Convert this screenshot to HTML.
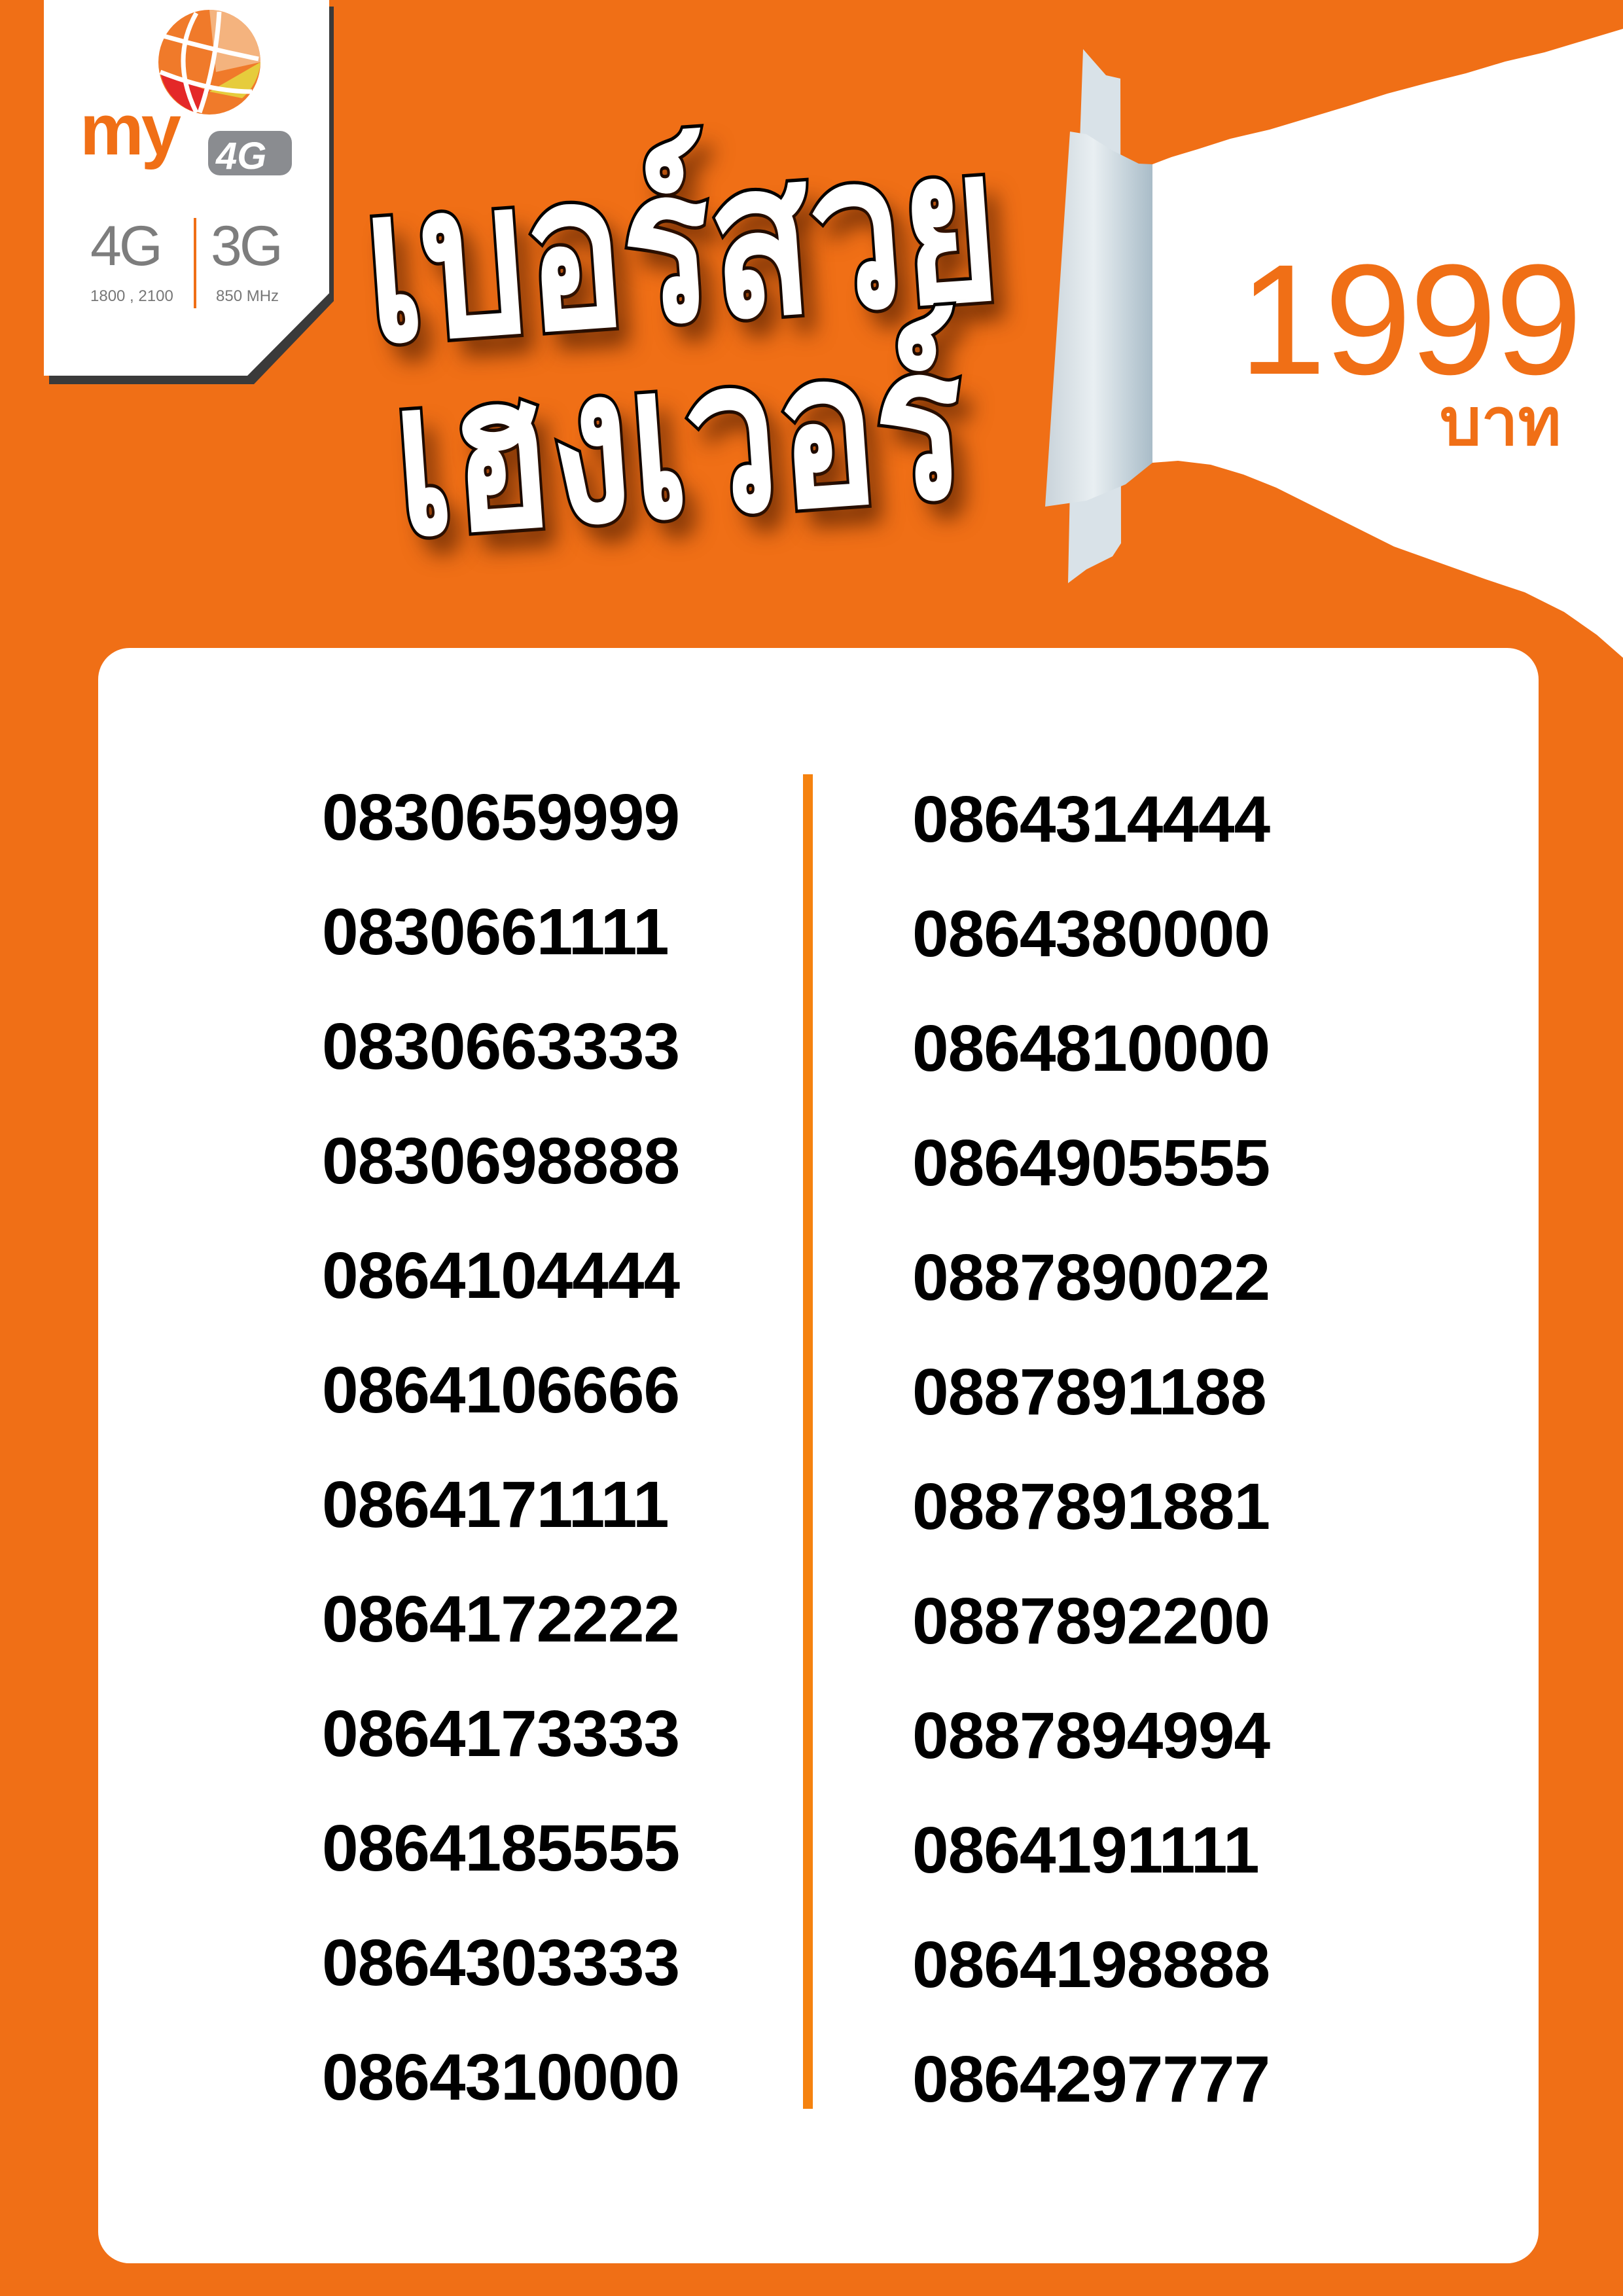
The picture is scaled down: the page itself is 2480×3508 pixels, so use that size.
<!DOCTYPE html>
<html><head><meta charset="utf-8">
<style>
html,body{margin:0;padding:0}
body{width:2480px;height:3508px;background:#f06f16;position:relative;overflow:hidden;font-family:"Liberation Sans","DejaVu Sans",sans-serif}
.abs{position:absolute}
.card{left:150px;top:990px;width:2201px;height:2468px;background:#fff;border-radius:48px}
.div{left:1227px;top:1183px;width:15px;height:2039px;background:#f5820f}
.col{position:absolute;font-weight:bold;font-size:100px;letter-spacing:-1px;color:#000;line-height:175px}
.title{color:#fff;font-family:"Liberation Sans","DejaVu Sans",sans-serif;font-weight:bold;-webkit-text-stroke:8px #000;paint-order:stroke fill;text-shadow:18px 22px 28px rgba(80,30,0,.75);white-space:nowrap;transform-origin:0 0}
</style></head><body>

<svg class="abs" style="left:0;top:0" width="2480" height="1100">
  <polygon fill="#fff" points="1761,251 1790,240 1830,228 1880,212 1940,198 2000,180 2060,162 2120,143 2180,127 2240,112 2300,94 2360,80 2420,62 2480,44 2480,1005 2440,970 2390,935 2330,905 2270,885 2200,860 2130,835 2060,800 2000,770 1950,745 1900,725 1850,710 1800,704 1761,707"/>
  <defs><linearGradient id="rg" x1="0" x2="1"><stop offset="0" stop-color="#c9d3da"/><stop offset=".45" stop-color="#e9eff2"/><stop offset="1" stop-color="#a9bcc8"/></linearGradient></defs>
  <polygon fill="#d9e2e8" points="1655,75 1668,90 1690,115 1712,120 1713,830 1700,850 1660,870 1632,891 1640,500"/>
  <polygon fill="url(#rg)" points="1635,201 1660,205 1700,230 1740,250 1761,251 1761,707 1720,740 1660,765 1597,774"/>
</svg>

<svg class="abs" style="left:0;top:0" width="560" height="640">
  <polygon fill="#3a3a3a" points="75,10 510,10 510,460 388,587 75,587"/>
  <polygon fill="#fff" points="67,0 503,0 503,448 378,574 67,574"/>
  <ellipse cx="320" cy="95" rx="78" ry="80" fill="#f07a2a"/>
  <path d="M320,15 A78,80 0 0 1 398,95 L330,110 Z" fill="#f4b37e"/>
  <path d="M398,95 A78,80 0 0 1 370,150 L320,140 Z" fill="#e6cc3c"/>
  <path d="M245,110 A78,80 0 0 0 300,172 L320,140 Z" fill="#e42828"/>
  <path d="M300,20 Q260,90 300,172 M250,55 Q320,75 395,90 M245,110 Q320,140 385,140 M335,18 Q330,100 305,172" stroke="#fff" stroke-width="7" fill="none"/>
  <text x="122" y="236" font-family="Liberation Sans" font-weight="bold" font-size="110" fill="#f06f16" letter-spacing="-4">my</text>
  <rect x="318" y="200" width="128" height="68" rx="18" fill="#8a8c90"/>
  <text x="330" y="258" font-family="Liberation Sans" font-weight="bold" font-style="italic" font-size="58" fill="#fff">4G</text>
  <text x="138" y="405" font-family="Liberation Sans" font-size="86" fill="#7d7d7d" letter-spacing="-4">4G</text>
  <rect x="296" y="333" width="4" height="138" fill="#f06f16"/>
  <text x="322" y="405" font-family="Liberation Sans" font-size="86" fill="#7d7d7d" letter-spacing="-4">3G</text>
  <text x="138" y="460" font-family="Liberation Sans" font-size="24" fill="#777">1800 , 2100</text>
  <text x="330" y="460" font-family="Liberation Sans" font-size="24" fill="#777">850 MHz</text>
</svg>

<div class="abs title" style="left:540px;top:150px;font-size:250px;transform:rotate(-4deg) scaleY(1.3)">เบอร์สวย</div>
<div class="abs title" style="left:585px;top:445px;font-size:250px;transform:rotate(-4deg) scaleY(1.3)">เฮงเวอร์</div>

<div class="abs" style="left:1893px;top:338px;font-size:240px;color:#f06f16;line-height:300px;letter-spacing:-3px">1999</div>
<div class="abs" style="left:2200px;top:585px;font-size:100px;font-weight:bold;color:#f06f16;line-height:120px">บาท</div>

<div class="abs card"></div>
<div class="abs div"></div>

<div class="col" style="left:492px;top:1162px">0830659999<br>0830661111<br>0830663333<br>0830698888<br>0864104444<br>0864106666<br>0864171111<br>0864172222<br>0864173333<br>0864185555<br>0864303333<br>0864310000</div>
<div class="col" style="left:1394px;top:1165px">0864314444<br>0864380000<br>0864810000<br>0864905555<br>0887890022<br>0887891188<br>0887891881<br>0887892200<br>0887894994<br>0864191111<br>0864198888<br>0864297777</div>

</body></html>
